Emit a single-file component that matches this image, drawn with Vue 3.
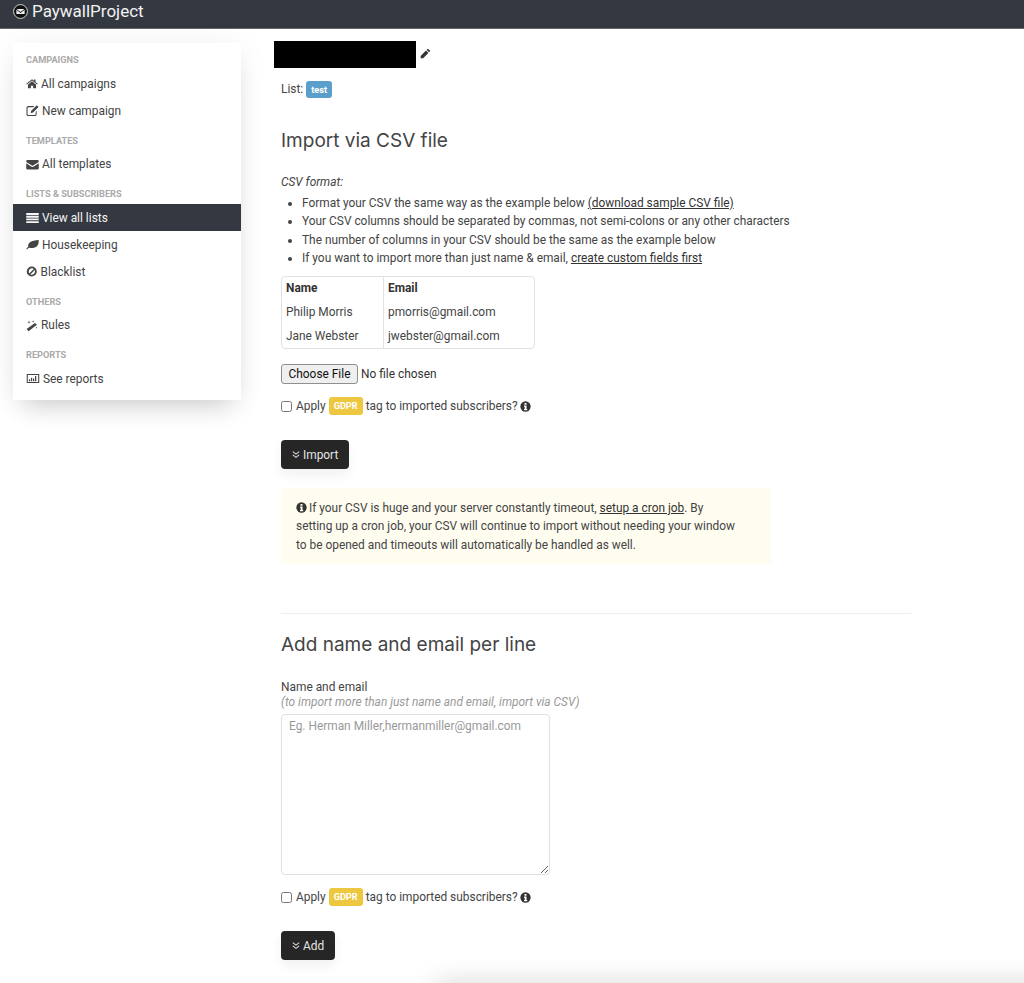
<script setup>
const csvRules = [
  { text: 'Format your CSV the same way as the example below ', link: '(download sample CSV file)' },
  { text: 'Your CSV columns should be separated by commas, not semi-colons or any other characters' },
  { text: 'The number of columns in your CSV should be the same as the example below' },
  { text: 'If you want to import more than just name & email, ', link: 'create custom fields first' },
]
const nav = [
  { label: 'Campaigns', items: [{ t: 'All campaigns', i: 'home' }, { t: 'New campaign', i: 'edit' }] },
  { label: 'Templates', items: [{ t: 'All templates', i: 'mail' }] },
  { label: 'Lists & subscribers', items: [{ t: 'View all lists', i: 'list', active: true }, { t: 'Housekeeping', i: 'leaf' }, { t: 'Blacklist', i: 'ban' }] },
  { label: 'Others', items: [{ t: 'Rules', i: 'wand' }] },
  { label: 'Reports', items: [{ t: 'See reports', i: 'chart' }] },
]
</script>

<template>
  <div class="page">
    <header class="topbar">
      <svg class="logo" viewBox="0 0 16 16" width="15" height="15">
        <circle cx="8" cy="8" r="7.4" fill="#111" stroke="#ddd" stroke-width="1" />
        <path d="M3.8 5.2h8.4L8 8.4zM3.6 6.2v4.6h8.8V6.2L8 9.6z" fill="#eee" />
      </svg>
      <span class="brand">PaywallProject</span>
    </header>

    <div class="body">
      <nav class="sidebar">
        <template v-for="group in nav" :key="group.label">
          <div class="nav-label">{{ group.label }}</div>
          <a v-for="item in group.items" :key="item.t" class="nav-item" :class="{ active: item.active }">
            <svg class="nav-icon" :class="'ic-' + item.i" viewBox="0 0 16 16" fill="currentColor">
              <template v-if="item.i === 'home'">
                <path d="M8 2.2 .4 8.4l.9 1L8 3.9l6.7 5.5.9-1-2.9-2.4V2.6h-1.900v1.8zM8 5 2.6 9.5v4.7h3.9v-3.3h3v3.3h3.9V9.5z" />
              </template>
              <template v-else-if="item.i === 'edit'">
                <path d="M2.8 2.6h7.4l-1.3 1.3H2.9c-.6 0-1 .4-1 1v7.6c0 .6.4 1 1 1h8c.6 0 1-.4 1-1V9.6l1.2-1.2v4.2c0 1.3-1 2.3-2.2 2.3H2.800c-1.3 0-2.2-1-2.2-2.3V4.900c0-1.3 1-2.3 2.2-2.3z" />
                <path d="M13.3 1.6 15.4 3.7 8.6 10.5l-2.9.8.8-2.9z" />
              </template>
              <template v-else-if="item.i === 'mail'">
                <path d="M.3 3.9c0-.8.6-1.4 1.4-1.4h12.6c.8 0 1.4.6 1.4 1.4 0 .6-.4 1.1-.9 1.5L8.7 9.3c-.4.3-1 .3-1.4 0L1.2 5.4C.7 5 .3 4.5.3 3.9z" />
                <path d="M.3 6.6v6.1c0 .8.6 1.4 1.4 1.4h12.6c.8 0 1.4-.6 1.4-1.4V6.6l-6 4c-1 .7-2.4.7-3.400 0z" />
              </template>
              <template v-else-if="item.i === 'list'">
                <path d="M.3 2.5h15.4v2.4H.3zM.3 5.9h15.4v2.3H.3zM.3 9.2h15.4v2.3H.3zM.3 12.5h15.4v2.2H.3z" />
              </template>
              <template v-else-if="item.i === 'leaf'">
                <path d="M.4 13.4c.9-1.4 1.6-2 2.4-2.6C2 6 6.2 3 15.6 2.6c.4 3.6-.7 9.2-7 9.8-2.3.2-3.8-.3-4.7-.4-.9.4-2.1 1.2-2.6 2z" />
              </template>
              <template v-else-if="item.i === 'ban'">
                <path fill-rule="evenodd" d="M8 1a7 7 0 1 1 0 14A7 7 0 0 1 8 1zM4.4 10.900l6.500-6.500A4.700 4.700 0 0 0 4.400 10.900zm1.600 1.300A4.700 4.700 0 0 0 12.200 6z" />
              </template>
              <template v-else-if="item.i === 'wand'">
                <path d="M12 4.500 14.500 7 3.500 15.500 .8 12.800z" />
                <path d="M4 1.500 4.600 3l1.400.5-1.400.5L4 5.500 3.400 4 2 3.500 3.400 3zM9.500 1l.5 1.300 1.200.4-1.200.4-.5 1.300L9 3.100l-1.200-.4L9 2.300zM14 9.500l.4 1 1 .4-1 .4-.4 1-.4-1-1-.4 1-.4z" />
              </template>
              <template v-else>
                <path fill-rule="evenodd" d="M.3 2.500h15.400v11H.3zm1.300 1.300v8.400h12.800V3.800z" />
                <path d="M3 9h1.500v2.300H3zM5.500 7H7v4.300H5.500zM8 8h1.500v3.300H8zM10.500 5H12v6.300h-1.500z" />
              </template>
            </svg>
            <span>{{ item.t }}</span>
          </a>
        </template>
      </nav>

      <main class="content">
        <div class="title-row">
          <div class="redacted"></div>
          <svg class="pencil" viewBox="0 0 16 16" width="11" height="11" fill="#333">
            <path d="M11.500 1 15 4.500l-1.800 1.800-3.500-3.500zM8.700 3.800l3.500 3.500L4.500 15H1v-3.500z" />
          </svg>
        </div>
        <p class="list-line">List: <span class="tag-blue">test</span></p>

        <h2 class="h-import">Import via CSV file</h2>

        <p class="csv-format"><em>CSV format:</em></p>
        <ul class="rules">
          <li v-for="r in csvRules" :key="r.text">{{ r.text }}<a v-if="r.link" class="u">{{ r.link }}</a></li>
        </ul>

        <div class="sample">
          <div class="col col-name">
            <b>Name</b><span>Philip Morris</span><span>Jane Webster</span>
          </div>
          <div class="col">
            <b>Email</b><span>pmorris@gmail.com</span><span>jwebster@gmail.com</span>
          </div>
        </div>

        <div class="file-row">
          <span class="file-btn">Choose File</span>
          <span class="file-none">No file chosen</span>
        </div>

        <label class="gdpr gdpr-1">
          <input type="checkbox" class="check" />
          <span>Apply</span><span class="tag-yellow">GDPR</span><span>tag to imported subscribers?</span>
          <svg class="info" viewBox="0 0 16 16" width="11" height="11"><circle cx="8" cy="8" r="7.500" fill="#333" /><path d="M6.500 3h3v2.300h-3zM5.800 6.500h3.700v5h1v1.800H5.800v-1.800h1v-3.200h-1z" fill="#fff" /></svg>
        </label>

        <button class="btn btn-import" type="button">
          <svg class="chev" viewBox="0 0 10 10" width="8" height="9"><path d="M1 1.500 5 4.500l4-3M1 5.500l4 3 4-3" fill="none" stroke="#ddd" stroke-width="1.300" /></svg>
          Import
        </button>

        <div class="notice">
          <svg class="info info-n" viewBox="0 0 16 16" width="11" height="11"><circle cx="8" cy="8" r="7.500" fill="#333" /><path d="M6.500 3h3v2.300h-3zM5.800 6.500h3.700v5h1v1.800H5.800v-1.800h1v-3.200h-1z" fill="#fffdf0" /></svg>
          If your CSV is huge and your server constantly timeout, <a class="u">setup a cron job</a>. By setting up a cron job, your CSV will continue to import without needing your window to be opened and timeouts will automatically be handled as well.
        </div>

        <hr class="rule" />

        <h2 class="h-add">Add name and email per line</h2>

        <div class="field-label">Name and email</div>
        <div class="field-hint">(to import more than just name and email, import via CSV)</div>
        <textarea class="area" placeholder="Eg. Herman Miller,hermanmiller@gmail.com"></textarea>

        <label class="gdpr gdpr-2">
          <input type="checkbox" class="check" />
          <span>Apply</span><span class="tag-yellow">GDPR</span><span>tag to imported subscribers?</span>
          <svg class="info" viewBox="0 0 16 16" width="11" height="11"><circle cx="8" cy="8" r="7.500" fill="#333" /><path d="M6.500 3h3v2.300h-3zM5.800 6.500h3.700v5h1v1.800H5.800v-1.800h1v-3.200h-1z" fill="#fff" /></svg>
        </label>

        <button class="btn btn-add" type="button">
          <svg class="chev" viewBox="0 0 10 10" width="8" height="9"><path d="M1 1.500 5 4.500l4-3M1 5.500l4 3 4-3" fill="none" stroke="#ddd" stroke-width="1.300" /></svg>
          Add
        </button>
        <div class="footer-edge"></div>
      </main>
    </div>
  </div>
</template>

<style>
html, body { margin: 0; background: #fff; }
</style>

<style scoped>
.page {
  height: 983px;
  overflow: hidden;
  font-family: Roboto, "Liberation Sans", sans-serif;
  font-size: 11.9px;
  line-height: 18px;
  color: #444;
  background: #fff;
}
.topbar {
  height: 29px;
  background: #343841;
  border-bottom: 1px solid #666;
  box-sizing: border-box;
  display: flex;
  align-items: center;
  padding-left: 13px;
  gap: 4px;
}
.logo { flex: none; margin-top: -5px; }
.brand { color: #f2f2f2; font-size: 17px; margin-top: -6px; }
.body { display: flex; align-items: flex-start; }
.sidebar {
  width: 228px;
  margin: 14px 0 0 13px;
  padding: 11px 0 7.5px;
  box-sizing: border-box;
  background: #fff;
  box-shadow: 0 0 30px rgba(0, 0, 0, .05), 0 15px 25px -10px rgba(0, 0, 0, .18);
  flex: none;
}
.nav-label {
  font-size: 9.2px;
  font-weight: 700;
  line-height: 12px;
  padding-left: 13px;
  margin: 0 0 4px;
  text-transform: uppercase;
  color: #aaa;
}
.nav-item + .nav-label { margin-top: 10.5px; }
.nav-item {
  height: 27px;
  display: flex;
  align-items: center;
  gap: 3px;
  padding-left: 13px;
  color: #444;
}
.nav-item.active { background: #343841; color: #f5f5f5; }
.nav-icon { flex: none; width: 13px; height: 13px; }
.ic-home, .ic-wand { width: 12px; }
.ic-ban { width: 11.5px; }
.ic-chart { width: 14px; }
.content {
  margin-left: 40px;
  width: 630px;
  flex: none;
  position: relative;
}
.title-row {
  display: flex;
  align-items: center;
  margin: 12px 0 0 -7px;
  gap: 4px;
  height: 27px;
}
.redacted { width: 142px; height: 27px; background: #000; }
.pencil { margin-top: -2px; }
.list-line { margin: 12px 0 0; display: flex; align-items: center; gap: 3px; height: 18px; }
.tag-blue {
  background: #5a9fcc;
  color: #fff;
  font-size: 9.2px;
  font-weight: 700;
  line-height: 17px;
  padding: 0 5px;
  border-radius: 3px;
}
h2 {
  font-family: Inter, "Noto Sans", sans-serif;
  font-weight: 400;
  font-size: 19px;
  line-height: 26px;
  color: #444;
  margin: 0;
}
.h-import { margin-top: 30px; }
.csv-format { margin: 19px 0 0; }
.rules { margin: 3px 0 0; padding: 0 0 0 21px; }
.rules li { line-height: 18.3px; }
.u { text-decoration: underline; color: #333; }
.sample {
  margin-top: 9px;
  width: 254px;
  height: 73px;
  box-sizing: border-box;
  border: 1px solid #e2e2e2;
  border-radius: 4px;
  display: flex;
}
.col { display: flex; flex-direction: column; padding-left: 4px; flex: 1; }
.col b, .col span { height: 24px; line-height: 23px; }
.col b { color: #333; font-weight: 700; }
.col-name { flex: none; width: 102px; box-sizing: border-box; border-right: 1px solid #e2e2e2; }
.file-row { margin-top: 15px; display: flex; align-items: center; gap: 3px; }
.file-btn {
  width: 77px;
  text-align: center;
  box-sizing: border-box;
  line-height: 18px;
  background: #efefef;
  border: 1px solid #8f8f8f;
  border-radius: 3px;
  color: #111;
}
.file-none { color: #333; }
.gdpr { display: flex; align-items: center; height: 18px; }
.gdpr-1 { margin-top: 13px; }
.gdpr-2 { margin-top: 13px; }
.check {
  width: 11px;
  height: 11px;
  margin: 0 4px 0 0;
}
.tag-yellow {
  background: #edc73f;
  color: #fff;
  font-size: 9.2px;
  font-weight: 700;
  line-height: 18px;
  padding: 0 5px;
  border-radius: 3px;
  margin: 0 3px;
}
.info { margin-left: 2px; flex: none; }
.info-n { margin: 0 -1px 0 0; vertical-align: -1px; }
.btn {
  display: flex;
  align-items: center;
  gap: 3px;
  height: 29px;
  border: 0;
  border-radius: 4px;
  background: #262626;
  color: #e4e4e4;
  font: 11.9px Roboto, sans-serif;
  padding: 0 11px;
  box-shadow: 0 6px 12px rgba(0, 0, 0, .06);
}
.btn-import { margin-top: 25px; }
.btn-add { margin-top: 25px; }
.notice {
  margin-top: 19px;
  width: 490px;
  height: 76px;
  box-sizing: border-box;
  background: #fffdf0;
  padding: 10.5px 30px 0 15px;
  line-height: 18.5px;
  border-radius: 3px;
}
.rule { border: 0; border-top: 1px solid #eee; width: 630px; margin: 49px 0 0; }
.h-add { margin-top: 18px; }
.field-label { margin-top: 21px; line-height: 16px; }
.field-hint { font-style: italic; color: #999; line-height: 15px; }
.area {
  display: block;
  margin-top: 4px;
  width: 269px;
  height: 161px;
  box-sizing: border-box;
  border: 1px solid #e0e0e0;
  border-radius: 4px;
  padding: 2px 7px;
  font: 11.9px/18px Roboto, sans-serif;
  background: #fff;
  color: #444;
}
.area::placeholder { color: #999; }
.footer-edge {
  position: absolute;
  left: 155px;
  width: 700px;
  top: 954px;
  height: 40px;
  box-shadow: 0 0 28px rgba(0, 0, 0, .16);
}
</style>
